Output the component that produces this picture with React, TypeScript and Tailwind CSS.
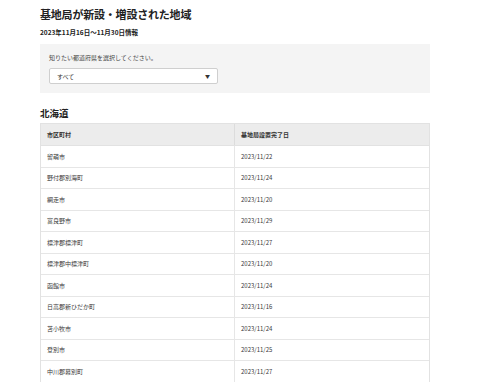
import React from "react";

const rows: [string, string][] = [
  ["留萌市", "2023/11/22"],
  ["野付郡別海町", "2023/11/24"],
  ["網走市", "2023/11/20"],
  ["富良野市", "2023/11/29"],
  ["標津郡標津町", "2023/11/27"],
  ["標津郡中標津町", "2023/11/20"],
  ["函館市", "2023/11/24"],
  ["日高郡新ひだか町", "2023/11/16"],
  ["苫小牧市", "2023/11/24"],
  ["登別市", "2023/11/25"],
  ["中川郡幕別町", "2023/11/27"],
  ["", ""],
];

export default function App() {
  return (
    <div
      className="w-[480px] h-[382px] overflow-hidden bg-white text-[#333]"
      style={{ fontFamily: '"Noto Sans CJK JP", "Noto Sans", sans-serif' }}
    >
      <div className="ml-[40px] w-[390px] pt-[6px]">
        <h1 className="text-[11px] leading-[16px] font-bold text-[#222] tracking-[-0.2px]">
          基地局が新設・増設された地域
        </h1>
        <p className="mt-[5px] text-[6.5px] leading-[10px] font-bold text-[#222]">
          2023年11月16日〜11月30日情報
        </p>
        <div className="mt-[7px] bg-[#f4f4f4] h-[49px] px-[9px] pt-[9px]">
          <p className="text-[6px] leading-[10px] text-[#444]">知りたい都道府県を選択してください。</p>
          <div className="mt-[5px] w-[169px] h-[16px] bg-white border border-[#cfcfcf] rounded-[2px] flex items-center justify-between pl-[7px] pr-[7px]">
            <span className="text-[6px] text-[#333]">すべて</span>
            <span className="text-[5px] text-[#333]">▼</span>
          </div>
        </div>
        <h2 className="mt-[13px] text-[9.5px] leading-[14px] font-bold text-[#222]">北海道</h2>
        <div className="mt-[3px] border-l border-r border-t border-[#e2e2e2]">
          <div className="flex h-[22px] bg-[#ececec] border-b border-[#e2e2e2] text-[6px] font-bold text-[#333]">
            <div className="w-[194px] border-r border-[#dcdcdc] flex items-center pl-[6px]">市区町村</div>
            <div className="flex-1 flex items-center pl-[6px]">基地局設置完了日</div>
          </div>
          {rows.map(([a, b], i) => (
            <div key={i} className="flex h-[21.5px] border-b border-[#e6e6e6] text-[6px] text-[#3a3a3a]">
              <div className="w-[194px] border-r border-[#e6e6e6] flex items-center pl-[6px]">{a}</div>
              <div className="flex-1 flex items-center pl-[6px]">{b}</div>
            </div>
          ))}
        </div>
      </div>
    </div>
  );
}
